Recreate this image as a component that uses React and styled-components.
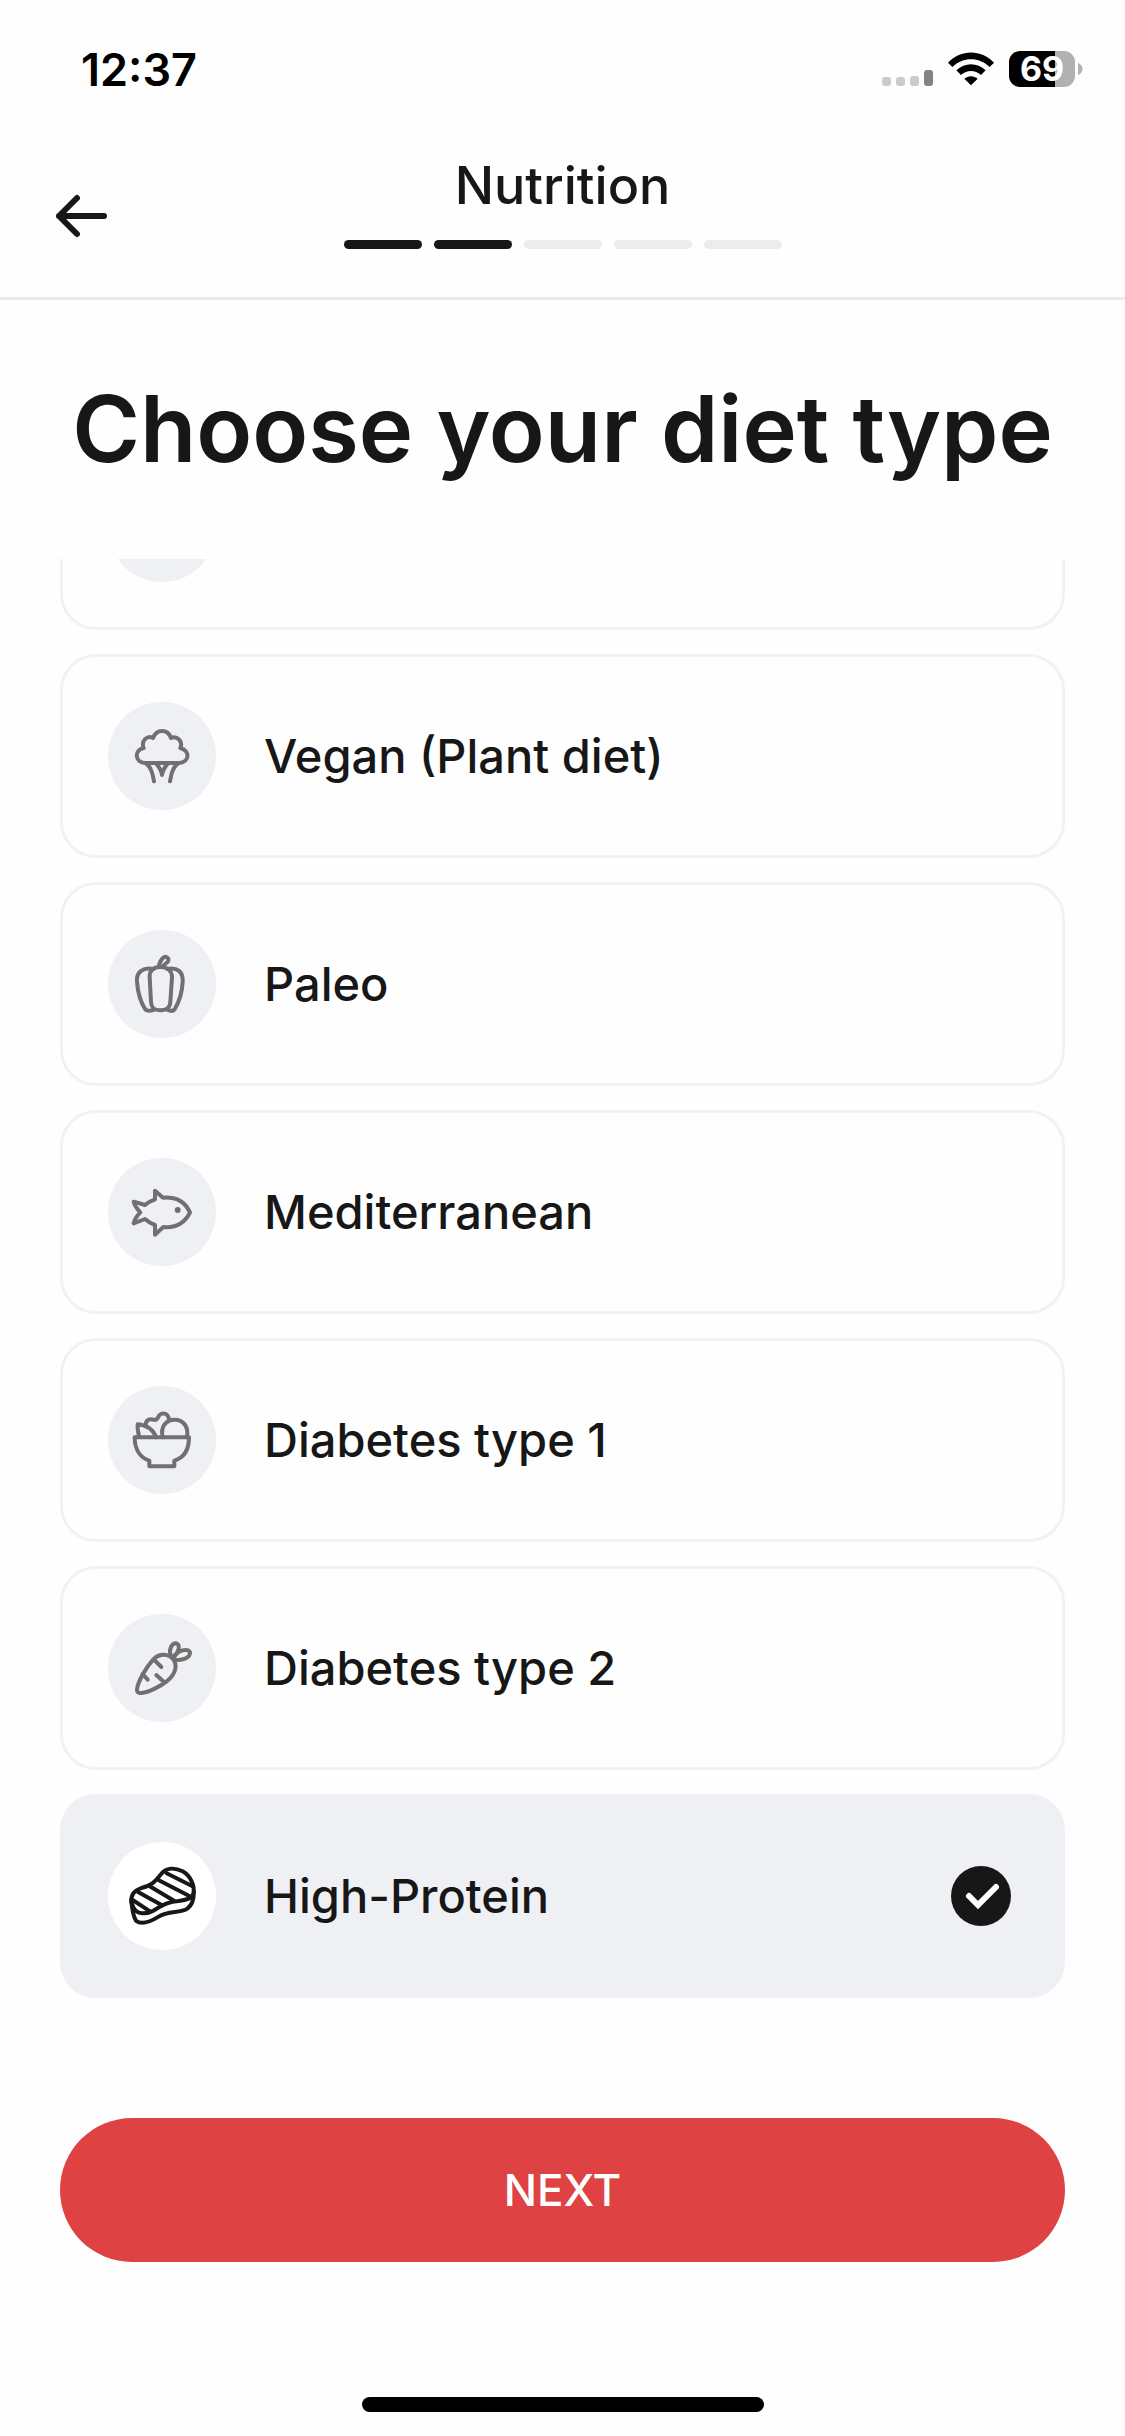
import { useLayoutEffect, useRef, useState } from "react";
import styled, { createGlobalStyle } from "styled-components";

const GlobalStyle = createGlobalStyle`
  * {
    box-sizing: border-box;
  }
  body {
    margin: 0;
    background: #fefefe;
    color: #171717;
    font-family: Inter, "Liberation Sans", sans-serif;
  }
`;

const Screen = styled.div`
  height: 100vh;
  display: flex;
  flex-direction: column;
`;
const StatusBar = styled.div`
  display: flex;
  align-items: center;
  justify-content: space-between;
  height: 138px;
  padding: 0 42px 0 81px;
`;
const Time = styled.div`
  font-size: 45px;
  font-weight: 600;
  color: #000;
`;
const StatusIcons = styled.div`
  display: flex;
  align-items: center;
  gap: 15px;
`;
const Battery = styled.div`
  display: flex;
  align-items: center;
  gap: 3px;
`;
const BatteryLevel = styled.div`
  width: 66px;
  height: 36px;
  border-radius: 11px;
  background: linear-gradient(90deg, #000 70%, #b1b1b1 70%);
  color: #fff;
  font-size: 34px;
  font-weight: 700;
  line-height: 36px;
  text-align: center;
`;
const Header = styled.header`
  display: grid;
  grid-template-columns: 1fr auto 1fr;
  height: 162px;
  padding: 0 48px;
  border-bottom: 3px solid #ebebeb;
`;
const BackButton = styled.button`
  align-self: start;
  justify-self: start;
  display: flex;
  padding: 45px 0;
  border: 0;
  background: none;
`;
const HeaderCenter = styled.div`
  display: flex;
  flex-direction: column;
  align-items: center;
  gap: 22px;
  padding-top: 16px;
`;
const HeaderTitle = styled.div`
  font-size: 52px;
  font-weight: 500;
  line-height: 64px;
`;
const Steps = styled.div`
  display: flex;
  gap: 12px;
`;
const Step = styled.div`
  width: 78px;
  height: 9px;
  border-radius: 5px;
  background: ${({ $done }) => ($done ? "#171717" : "#ececec")};
`;
const Title = styled.h1`
  margin: 0;
  padding: 69px 24px 70px;
  font-size: 92px;
  font-weight: 600;
  line-height: 120px;
  text-align: center;
`;
const DietList = styled.div`
  flex: 1;
  min-height: 0;
  display: flex;
  flex-direction: column;
  gap: 24px;
  padding: 0 60px;
  overflow-y: auto;
  scrollbar-width: none;
`;
const DietCard = styled.label`
  flex: none;
  display: flex;
  align-items: center;
  justify-content: space-between;
  gap: 48px;
  height: 204px;
  padding: 0 51px 0 45px;
  border: 3px solid ${({ $selected }) => ($selected ? "#eff0f4" : "#f1f2f3")};
  border-radius: 36px;
  background: ${({ $selected }) => ($selected ? "#eff0f4" : "#fefefe")};
`;
const IconCircle = styled.span`
  display: flex;
  width: 108px;
  height: 108px;
  border-radius: 50%;
  background: ${({ $selected }) => ($selected ? "#fff" : "#eff0f4")};
  color: ${({ $selected }) => ($selected ? "#171717" : "#707070")};
`;
const DietName = styled.span`
  flex: 1;
  font-size: 47px;
  font-weight: 500;
  line-height: 60px;
`;
const Radio = styled.input`
  appearance: none;
  width: 60px;
  height: 60px;
  margin: 0;
  border-radius: 50%;

  &:checked {
    background: #171717;
  }
`;
const RadioWrap = styled.span`
  display: grid;

  > * {
    grid-area: 1 / 1;
  }
  svg {
    pointer-events: none;
  }
`;
const Footer = styled.footer`
  display: flex;
  flex-direction: column;
  align-items: center;
  gap: 135px;
  padding: 120px 60px 24px;
`;
const NextButton = styled.button`
  width: 100%;
  height: 144px;
  border: 0;
  border-radius: 72px;
  background: #de4243;
  color: #fff;
  font-family: inherit;
  font-size: 44px;
  font-weight: 500;
`;
const HomeIndicator = styled.div`
  width: 402px;
  max-width: 100%;
  height: 15px;
  border-radius: 8px;
  background: #000;
`;

const DietIcon = ({ children }) => (
  <svg
    width="108"
    height="108"
    viewBox="24 30 324 324"
    fill="none"
    stroke="currentColor"
    strokeWidth="12"
    strokeLinecap="round"
    strokeLinejoin="round"
    aria-hidden="true"
  >
    {children}
  </svg>
);

const Broccoli = () => (
  <DietIcon>
    <path d="M134 213C104 210 102 174 131 168C122 146 142 129 159 138C170 110 203 110 213 138C231 130 250 148 241 168C271 176 269 210 238 213Z" />
    <path d="M138 214C154 226 158 246 162 268M234 214C218 226 214 246 210 268" />
    <path d="M168 214C179 226 184 236 186 249C188 236 193 226 204 214" />
  </DietIcon>
);
const Pepper = () => (
  <DietIcon>
    <path d="M181 141C160 141 148 152 149 172L153 246C154 264 162 271 181 271C200 271 210 264 211 246L216 172C216 152 202 141 181 141Z" />
    <path d="M160 147C130 141 108 155 111 186C114 222 124 250 136 268C142 275 150 273 160 270" />
    <path d="M202 147C232 141 250 155 248 186C246 222 236 248 224 268C218 275 210 273 203 270" />
    <path d="M176 138C180 122 190 108 199 111C209 115 206 126 198 130C192 134 188 138 187 141" />
  </DietIcon>
);
const Fish = () => (
  <DietIcon>
    <path d="M165 128L189 149C230 147 254 160 270 193C254 226 226 240 190 237L165 260V231C154 227 145 222 135 213L101 226C104 212 112 202 121 193C112 184 104 174 101 161L135 171C144 163 154 158 165 154Z" />
    <circle cx="233" cy="186" r="9" fill="currentColor" stroke="none" />
  </DietIcon>
);
const Bowl = () => (
  <DietIcon>
    <path d="M104 184C104 222 122 246 148 254V271H223V254C250 246 267 222 267 184Z" />
    <path d="M188 184C180 150 200 131 224 131C250 131 268 154 260 184" />
    <path d="M118 183C113 166 112 156 113 145C140 148 160 160 168 184" />
    <path d="M137 150C136 132 148 126 164 132C176 132 172 116 186 113C198 110 206 118 207 131" />
  </DietIcon>
);
const Carrot = () => (
  <DietIcon>
    <path d="M214 160C200 148 176 150 160 166C138 190 114 232 111 256C110 264 115 268 124 267C148 265 182 246 200 232C228 210 236 180 214 160Z" />
    <path d="M163 168L184 189M128 210L143 227M192 234L169 213" />
    <path d="M214 158C204 140 214 118 228 118C242 120 238 144 220 160" />
    <path d="M220 160C234 138 262 132 270 144C272 162 244 172 222 166" />
  </DietIcon>
);
const Steak = () => (
  <DietIcon>
    <path d="M94 210C92 186 104 176 124 168C156 160 164 150 182 128C198 106 224 106 248 118C272 132 284 160 281 184C276 200 258 204 236 207C204 208 184 222 160 236C138 248 110 248 100 226Z" />
    <path d="M94 205C96 232 98 250 108 266C124 280 150 270 176 254C204 236 240 244 262 230C278 218 282 200 281 180" />
    <path d="M200 124L276 162M175 144L268 192M148 162L222 206M114 180L186 220M98 204L150 238" />
  </DietIcon>
);

const diets = [
  { id: "other", Icon: Carrot },
  { id: "vegan", name: "Vegan (Plant diet)", Icon: Broccoli },
  { id: "paleo", name: "Paleo", Icon: Pepper },
  { id: "mediterranean", name: "Mediterranean", Icon: Fish },
  { id: "diabetes-1", name: "Diabetes type 1", Icon: Bowl },
  { id: "diabetes-2", name: "Diabetes type 2", Icon: Carrot },
  { id: "high-protein", name: "High-Protein", Icon: Steak },
];

export default function App() {
  const [diet, setDiet] = useState("high-protein");
  const listRef = useRef(null);

  // open the list at the selected diet, which is the last one
  useLayoutEffect(() => {
    listRef.current.scrollTop = listRef.current.scrollHeight;
  }, []);

  return (
    <Screen>
      <GlobalStyle />
      <StatusBar>
        <Time>12:37</Time>
        <StatusIcons>
          <svg width="51" height="34" viewBox="0 0 51 34" aria-hidden="true">
            <g fill="#cbcbcb">
              <rect x="0" y="25" width="9" height="9" rx="3" />
              <rect x="14" y="25" width="9" height="9" rx="3" />
              <rect x="28" y="24" width="9" height="10" rx="3" />
            </g>
            <rect x="42" y="18" width="9" height="16" rx="3" fill="#838383" />
          </svg>
          <svg width="46" height="34" viewBox="0 0 138 102" aria-hidden="true">
            <path d="M0 32C38-9 100-9 138 32L125 45C93 14 45 14 13 45Z" />
            <path d="M25 55C50 31 88 31 113 55L99 69C81 53 57 53 39 69Z" />
            <path d="M49 80C60 70 78 70 89 80L69 100Z" />
          </svg>
          <Battery>
            <BatteryLevel>69</BatteryLevel>
            <svg width="5" height="12" viewBox="0 0 5 12" aria-hidden="true">
              <path d="M0 0C6 2 6 10 0 12Z" fill="#b1b1b1" />
            </svg>
          </Battery>
        </StatusIcons>
      </StatusBar>
      <Header>
        <BackButton aria-label="Back">
          <svg
            width="66"
            height="66"
            viewBox="0 0 66 66"
            fill="none"
            stroke="#171717"
            strokeWidth="6"
            strokeLinecap="round"
            strokeLinejoin="round"
          >
            <path d="M29 15L11 33L29 51M11 33H56" />
          </svg>
        </BackButton>
        <HeaderCenter>
          <HeaderTitle>Nutrition</HeaderTitle>
          <Steps>
            <Step $done />
            <Step $done />
            <Step />
            <Step />
            <Step />
          </Steps>
        </HeaderCenter>
      </Header>
      <Title>Choose your diet type</Title>
      <DietList ref={listRef} role="radiogroup" aria-label="Diet type">
        {diets.map(({ id, name, Icon }) => (
          <DietCard key={id} $selected={id === diet}>
            <IconCircle $selected={id === diet}>
              <Icon />
            </IconCircle>
            {name && <DietName>{name}</DietName>}
            <RadioWrap>
              <Radio
                type="radio"
                name="diet"
                value={id}
                aria-label={name || "Other diet"}
                checked={id === diet}
                onChange={() => setDiet(id)}
              />
              {id === diet && (
                <svg
                  width="60"
                  height="60"
                  viewBox="0 0 60 60"
                  fill="none"
                  stroke="#fff"
                  strokeWidth="6"
                  strokeLinecap="round"
                  aria-hidden="true"
                >
                  <path d="M18 30L27 39L45 21" />
                </svg>
              )}
            </RadioWrap>
          </DietCard>
        ))}
      </DietList>
      <Footer>
        <NextButton>NEXT</NextButton>
        <HomeIndicator />
      </Footer>
    </Screen>
  );
}
